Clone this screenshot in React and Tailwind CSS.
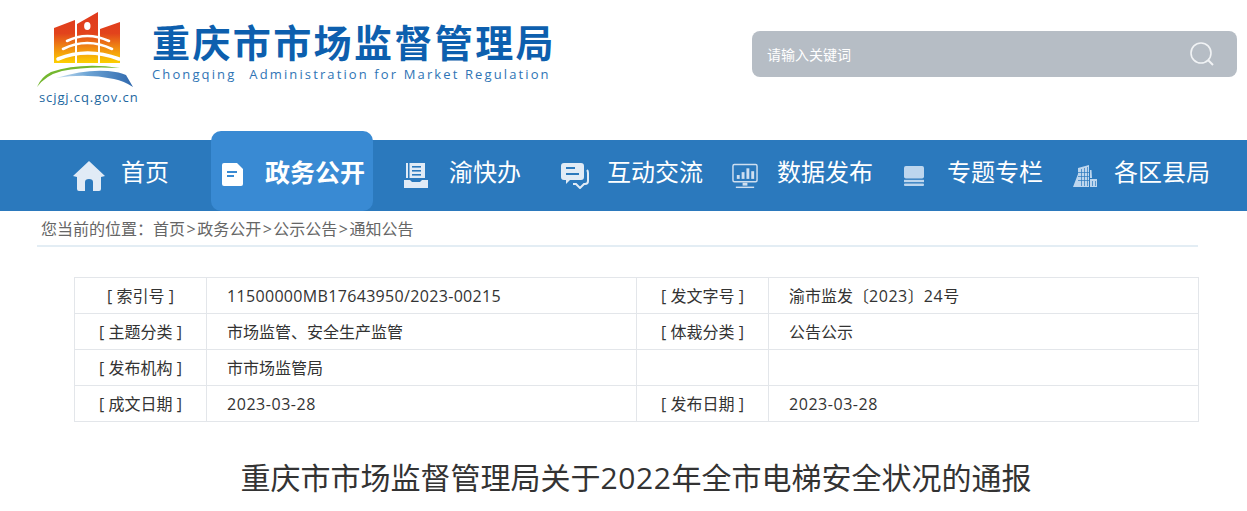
import React from 'react';

const fontStack = { fontFamily: '"Open Sans", "Noto Sans CJK SC", sans-serif' };

const HomeIcon = () => (
  <svg width="32" height="32" viewBox="0 0 32 32" fill="#e1ebf6">
    <path d="M16 1 L32 16 L28 17 V29 Q28 31 26 31 H20 V22 Q20 19 16 19 Q12 19 12 22 V31 H6 Q4 31 4 29 V17 L0 16 Z" />
  </svg>
);

const DocIcon = () => (
  <svg width="21" height="23" viewBox="0 0 21 23">
    <path d="M2 0 H15 L21 6 V21 Q21 23 19 23 H2 Q0 23 0 21 V2 Q0 0 2 0 Z" fill="#fff" />
    <rect x="5" y="8" width="10" height="2" fill="#398ad3" />
    <rect x="5" y="12" width="7" height="2" fill="#398ad3" />
  </svg>
);

const BookIcon = () => (
  <svg width="24" height="25" viewBox="0 0 24 25">
    <path d="M2 0 H21 V15 H2 Z M0 17 H6 L8 19 H16 L18 17 H24 V25 H0 Z" fill="#e1ebf6" />
    <rect x="4" y="0" width="1.5" height="15" fill="#2b79bd" />
    <rect x="8" y="3" width="9" height="1.6" fill="#2b79bd" />
    <rect x="8" y="7" width="9" height="1.6" fill="#2b79bd" />
    <rect x="8" y="11" width="9" height="1.6" fill="#2b79bd" />
  </svg>
);

const ChatIcon = () => (
  <svg width="28" height="26" viewBox="0 0 28 26">
    <path d="M3 0 H20 Q23 0 23 3 V14 Q23 17 20 17 H9 L5 21 V17 H3 Q0 17 0 14 V3 Q0 0 3 0 Z" fill="#e1ebf6" />
    <rect x="5" y="4" width="9" height="2" fill="#2b79bd" />
    <rect x="5" y="10" width="13" height="2" fill="#2b79bd" />
    <path d="M26 7 Q27 8 27 10 V18 Q27 21 24 21 H23 L19 25 L15 21 H12" fill="none" stroke="#e1ebf6" strokeWidth="2" />
  </svg>
);

const ScreenIcon = () => (
  <svg width="26" height="26" viewBox="0 0 27 26" fill="none">
    <rect x="1" y="1" width="25" height="18" rx="1.5" stroke="#cfdff0" strokeWidth="1.5" />
    <rect x="5" y="12" width="3" height="4" fill="#cfdff0" />
    <rect x="10" y="9" width="3" height="7" fill="#cfdff0" />
    <rect x="15" y="5" width="3" height="11" fill="#cfdff0" />
    <rect x="20" y="8" width="3" height="8" fill="#cfdff0" />
    <rect x="11" y="20" width="5" height="3" fill="#cfdff0" />
    <rect x="4" y="24" width="19" height="1.5" fill="#cfdff0" />
  </svg>
);

const StackIcon = () => (
  <svg width="20" height="20" viewBox="0 0 21 21" fill="#bdd6ee">
    <rect x="0" y="0" width="21" height="13" rx="2" />
    <rect x="0" y="14.5" width="21" height="2.5" />
    <rect x="0" y="18.5" width="21" height="2.5" rx="1" />
  </svg>
);

const BuildingIcon = () => (
  <svg width="24" height="22" viewBox="0 0 24 22" fill="#bdd6ee">
    <path d="M0 22 L5 9 L5 3 L16 0 L16 22 Z" />
    <path d="M17 5 L18.5 5 L19 13 H17 Z M17 14 H24 V22 H17 Z" />
    <g fill="#2b79bd">
      <rect x="8" y="4" width="0.7" height="17" />
      <rect x="11" y="3" width="0.7" height="18" />
      <rect x="14" y="2" width="0.7" height="19" />
      <rect x="5" y="7" width="11" height="0.7" />
      <rect x="5" y="11" width="11" height="0.7" />
      <rect x="5" y="15" width="11" height="0.7" />
      <rect x="19" y="16" width="0.7" height="5" />
      <rect x="22" y="16" width="0.7" height="5" />
    </g>
  </svg>
);

const SearchIcon = () => (
  <svg width="24" height="24" viewBox="0 0 24 24" fill="none" stroke="#f1f3f5">
    <circle cx="11" cy="11" r="10" strokeWidth="1.6" />
    <path d="M18 18 L23 23" strokeWidth="2" />
  </svg>
);

const Logo = () => (
  <svg width="104" height="78" viewBox="0 0 104 78">
    <defs>
      <linearGradient id="sun" x1="0" y1="0" x2="0" y2="1">
        <stop offset="0" stopColor="#e03a1d" />
        <stop offset="0.42" stopColor="#e2431c" />
        <stop offset="0.7" stopColor="#f08a12" />
        <stop offset="1" stopColor="#fdd000" />
      </linearGradient>
      <linearGradient id="arc" x1="0" y1="0" x2="1" y2="0">
        <stop offset="0" stopColor="#cfe3f3" />
        <stop offset="0.4" stopColor="#6fa6d6" />
        <stop offset="1" stopColor="#2f68ad" />
      </linearGradient>
    </defs>
    <path d="M18 17 L39 9 V52 H18 Z M41 13 L62 1 V52 H41 Z M64 18 L84 11 V52 H64 Z" fill="url(#sun)" />
    <ellipse cx="51.3" cy="15" rx="3.2" ry="4" fill="#fff" />
    <g fill="none" stroke="#fff" strokeLinecap="round">
      <path d="M31 30 Q51 20 73 30" strokeWidth="2.6" />
      <path d="M27 38 Q51 26 76 38" strokeWidth="2.6" />
      <path d="M22 48 Q51 36 83 48" strokeWidth="3.6" />
    </g>
    <path d="M1 76 Q5 66 15 61 Q45 51 84 57 Q50 55 26 60 Q10 64 1 76 Z" fill="#74b72f" />
    <path d="M20 67 Q50 58 72 60 Q84 61 90 64 L97 76 Q88 70 78 68 Q50 62 20 67 Z" fill="url(#arc)" />
  </svg>
);

const navItems = [
  { label: '首页', icon: <HomeIcon />, box: 'w-[138px] gap-[16px]' },
  { label: '政务公开', icon: <DocIcon />, box: 'w-[162px] pl-[11px] gap-[22px]', active: true },
  { label: '渝快办', icon: <BookIcon />, box: 'w-[188px] pl-[31px] gap-[21px]' },
  { label: '互动交流', icon: <ChatIcon />, box: 'w-[171px] gap-[18px]' },
  { label: '数据发布', icon: <ScreenIcon />, box: 'w-[172px] gap-[19px]' },
  { label: '专题专栏', icon: <StackIcon />, box: 'w-[169px] gap-[23px]' },
  { label: '各区县局', icon: <BuildingIcon />, box: 'w-[170px] gap-[17px]' },
];

const Num = ({ children }) => <span className="tracking-[0.54px]">{children}</span>;

const rows = [
  ['[ 索引号 ]', <span className="tracking-[0.33px]">11500000MB17643950/2023-00215</span>, '[ 发文字号 ]', <>渝市监发〔<Num>2023</Num>〕<Num>24</Num>号</>],
  ['[ 主题分类 ]', '市场监管、安全生产监管', '[ 体裁分类 ]', '公告公示'],
  ['[ 发布机构 ]', '市市场监管局', '', ''],
  ['[ 成文日期 ]', <Num>2023-03-28</Num>, '[ 发布日期 ]', <Num>2023-03-28</Num>],
];

const Sep = () => <span className="mx-[1.5px]">&gt;</span>;

export default function App() {
  return (
    <div className="h-[511px] w-[1247px] overflow-hidden bg-white" style={fontStack}>
      <header className="flex h-[140px] items-start">
        <div className="flex w-[752px] pl-[36px] pt-[11px]">
          <div className="flex w-[116px] flex-col">
            <Logo />
            <div className="pl-[3px] text-[13px] leading-[16px] tracking-[0.9px] text-[#22679f]">scjgj.cq.gov.cn</div>
          </div>
          <div className="pt-[9px]">
            <div className="text-[38px] font-bold leading-[44px] tracking-[2.4px] text-[#0d5fae]">重庆市市场监督管理局</div>
            <div className="mt-[1px] text-[13px] leading-[18px] tracking-[2.12px] whitespace-nowrap text-[#2f74b5]">
              <span className="mr-[13px]">Chongqing</span>Administration for Market Regulation
            </div>
          </div>
        </div>
        <div className="mt-[31px] flex h-[46px] w-[485px] items-center justify-between rounded-lg bg-[#b6bdc5] pl-[15px] pr-[23px]">
          <span className="text-[14px] text-white">请输入关键词</span>
          <SearchIcon />
        </div>
      </header>

      <nav className="flex h-[71px] items-center bg-[#2b79bd] pl-[73px]">
        {navItems.map((item) => (
          <div
            key={item.label}
            className={`flex shrink-0 items-center ${item.box} ${
              item.active
                ? '-mt-[9px] h-[80px] rounded-[10px] bg-[#398ad3] pt-[7px]'
                : 'h-full'
            }`}
          >
            {item.icon}
            <span className={`whitespace-nowrap text-white ${item.active ? 'pb-[4px] text-[25px] font-bold' : 'pb-[8px] text-2xl'}`}>{item.label}</span>
          </div>
        ))}
      </nav>

      <div className="mx-[37px] h-[36px] w-[1161px] border-b-2 border-[#e3edf4] pl-[4px] text-base leading-[37px] text-[#666666]">
        您当前的位置：首页<Sep />政务公开<Sep />公示公告<Sep />通知公告
      </div>

      <table className="mt-[30px] ml-[74px] w-[1125px] table-fixed border-collapse text-base text-[#333333]">
        <colgroup>
          <col className="w-[132px]" />
          <col className="w-[430px]" />
          <col className="w-[132px]" />
          <col />
        </colgroup>
        <tbody>
          {rows.map((row) => (
            <tr key={row[0]} className="h-[36px]">
              {row.map((cell, i) => (
                <td
                  key={i}
                  className={`border border-[#e3e6ea] p-0 ${i % 2 === 0 ? 'text-center' : 'pl-[20px]'}`}
                >
                  {cell}
                </td>
              ))}
            </tr>
          ))}
        </tbody>
      </table>

      <h1 className="mt-[32px] pl-[25px] text-center text-[30px] leading-[48px] text-[#333333]">
        重庆市市场监督管理局关于<span className="tracking-[0.6px]">2022</span>年全市电梯安全状况的通报
      </h1>
    </div>
  );
}
